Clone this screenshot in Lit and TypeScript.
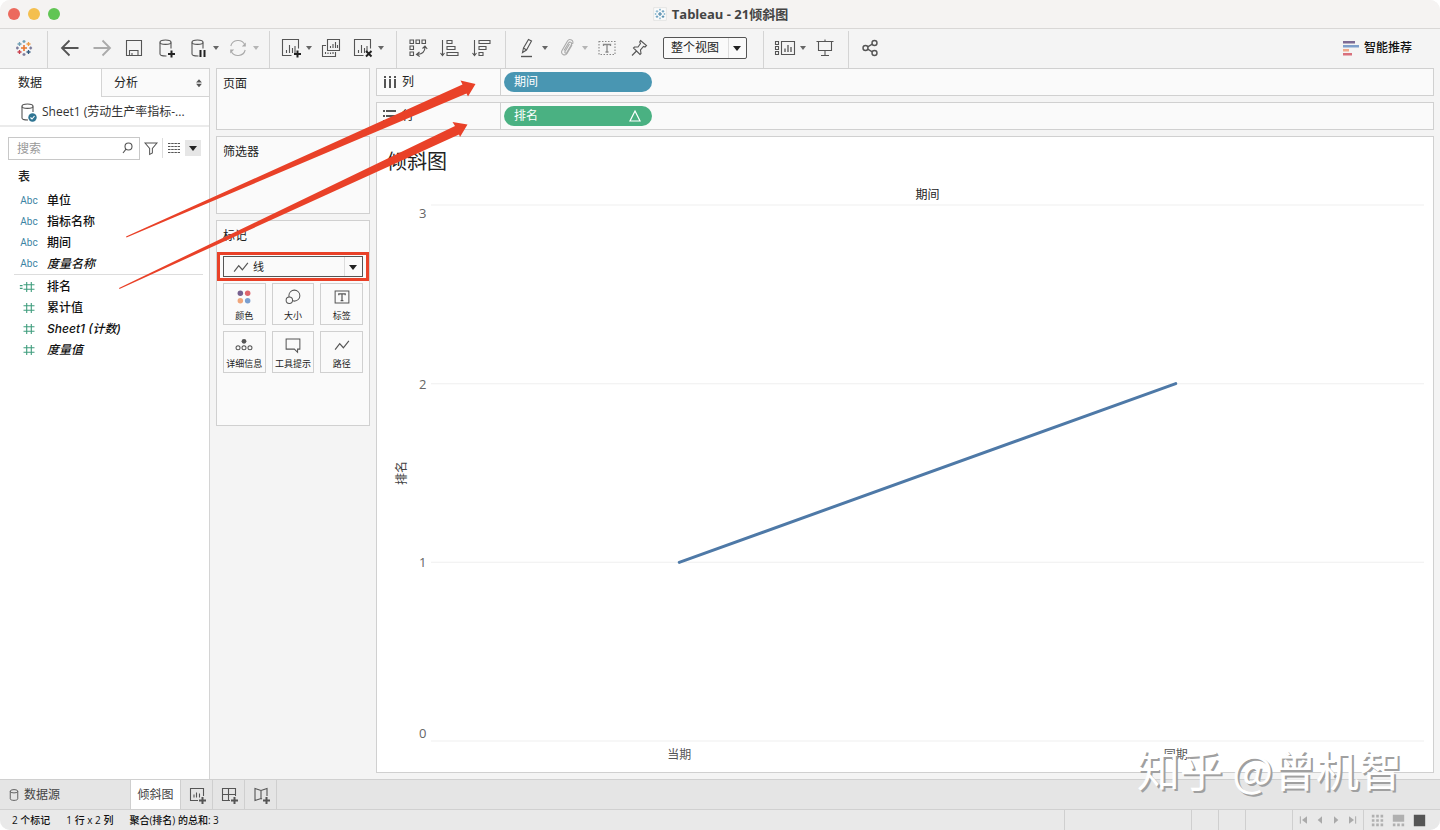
import { LitElement, html, svg, css, nothing, TemplateResult } from "lit";
import { customElement, property, state } from "lit/decorators.js";
import { classMap } from "lit/directives/class-map.js";

const plus = svg`<path d="M17.500 14.500v7M14 18h7" stroke="#222" stroke-width="2" fill="none"/>`;
const cylinder = svg`<path d="M12 20C8 20 6 19.200 6 18V6.500M17 6.500V12.500M12.500 20H12"/><ellipse cx="11.500" cy="6.200" rx="5.500" ry="2.200"/>`;
const bars = svg`<path d="M7.500 17v-3M10.500 17V9M13.500 17v-5M16 17v-7"/>`;
const letterT = (c: string) => svg`<path d="M8.500 10V8.500h7V10M12 8.500v7.500M10.500 16h3" stroke=${c} stroke-width="1.300"/>`;

const logo = (palette: string[]) => svg`
  <g stroke-width="1.300">
    <path d="M12 9v6M9 12h6" stroke=${palette[0]} stroke-width="1.600"/>
    <path d="M7.500 6v4M5.500 8h4" stroke=${palette[1]}/>
    <path d="M16.500 6v4M14.500 8h4" stroke=${palette[2]}/>
    <path d="M7.500 14v4M5.500 16h4" stroke=${palette[3]}/>
    <path d="M16.500 14v4M14.500 16h4" stroke=${palette[4]}/>
    <path d="M12 4v3M10.500 5.500h3" stroke=${palette[1]}/>
    <path d="M12 17v3M10.500 18.500h3" stroke=${palette[5]}/>
    <path d="M5.300 10.500v3M4 12h2.800" stroke=${palette[5]}/>
    <path d="M18.700 10.500v3M17.300 12h2.800" stroke=${palette[5]}/>
  </g>`;

const ICONS: Record<string, TemplateResult> = {
  logo: logo(["#e8762d", "#6f9fb5", "#eb9b45", "#c9414f", "#355c80", "#7b7b9b"]),
  logoBlue: svg`<path d="M2.500 2.500h19v19h-19z" fill="#fbfbfb" stroke="#ddd"/>${logo(["#3f7fa5", "#7fb0cc", "#5b95b8", "#5b95b8", "#3f7fa5", "#8db9d0"])}`,
  back: svg`<path d="M20.500 12H4M11.500 4.500L4 12l7.500 7.500" stroke-width="1.800"/>`,
  forward: svg`<path d="M3.500 12H20M12.500 4.500L20 12l-7.500 7.500" stroke="#aaa" stroke-width="1.800"/>`,
  save: svg`<path d="M4.500 4.500h15v15h-15zM7.500 19.500v-5h8.500v5M10 17v2.500"/>`,
  dataAdd: svg`${cylinder}${plus}`,
  dataPause: svg`${cylinder}<path d="M14.500 14v7M18.500 14v7" stroke="#222" stroke-width="2"/>`,
  refresh: svg`<g stroke="#aaa"><path d="M4.800 10a7.500 7.500 0 0 1 13.900-1.500M19.200 14a7.500 7.500 0 0 1-13.900 1.500"/><path d="M19.800 6.500v4h-4zM4.200 17.500v-4h4z" fill="#aaa" stroke="none"/></g>`,
  chartAdd: svg`<path d="M12.500 19.500h-9v-16h16v9"/>${bars}<path d="M18.500 14.500v7M15 18h7" stroke="#222" stroke-width="2"/>`,
  chartCopy: svg`<path d="M8.500 3.500h12v11h-12zM7 9.500H3.500v11h13V16"/><path d="M11.500 12v-2M14 12V8M16.500 12V6M18.500 12V9M6.500 18v-2M9 18v-1.500M11.500 18v-1.500M14 18v-2"/>`,
  chartClear: svg`<path d="M12.500 19.500h-9v-16h16v9"/>${bars}<path d="M15 15l5.500 5.500M20.500 15L15 20.500" stroke="#222" stroke-width="2"/>`,
  swap: svg`<path d="M4 4h3.500v3.500H4zM10 4h3.500v3.500H10zM16 4h3.500v3.500H16zM4 10h3.500v3.500H4zM4 16h3.500v3.500H4z"/><path d="M19 11c0 4-2.500 7-7.500 7.500M16.500 12.500L19 10l2.200 3M13.500 16l-3 2.500 3.200 2"/>`,
  sortUp: svg`<path d="M4.500 4v15M2.500 17l2 2.500 2-2.500M9 4.500h5v3H9zM9 10.500h8v3H9zM9 16.500h11v3H9z"/>`,
  sortDown: svg`<path d="M4.500 4v15M2.500 17l2 2.500 2-2.500M9 4.500h11v3H9zM9 10.500h7v3H9zM9 16.500h4v3H9z"/>`,
  highlight: svg`<path d="M7.500 16.500l1-4.500 5-8.500 3 1.500-5 9zM8.500 12l3 2" /><path d="M6 20.500h11" stroke-width="1.400"/>`,
  clip: svg`<path d="M17 9l-5 8.500c-2 3-7 .5-5-3L12.500 5c2-3.200 7-.5 5 3M14.500 8L10 15.500c-.8 1.500 1 2.200 1.800 1L16 9.500c1.800-3-1-4.500-2.500-2.500L9 14.500" stroke="#aaa"/>`,
  text: svg`<path d="M4 5.500h16v13H4z" stroke="#888" stroke-dasharray="1.500 1.500"/>${letterT("#888")}`,
  pin: svg`<path d="M13.500 4.500l6 5-1.500 1.500-1.500-.5-3 3.500.5 3.500-1 1L6.500 12l1-1 3.500 0 2.500-3.500-.8-1.500zM9.500 15L5 19.500"/>`,
  cards: svg`<path d="M2.500 5.500h3v3h-3zM2.500 10.500h3v3h-3zM2.500 15.500h3v3h-3zM8.500 5.500h13v13h-13z"/><path d="M12 16v-3.500M15 16V9M18 16v-5" stroke-width="1.300"/>`,
  present: svg`<path d="M3.500 5.500h17M5.500 5.500v9h13v-9M12 14.500v5M8 19.500h8M12 3.500v2"/>`,
  share: svg`<g stroke-width="1.400"><circle cx="7.500" cy="12" r="2.500"/><circle cx="16.500" cy="7" r="2.500"/><circle cx="16.500" cy="17" r="2.500"/><path d="M9.700 10.800l4.600-2.600M9.700 13.200l4.600 2.600"/></g>`,
  suggest: svg`<g stroke="none"><path d="M5 5h12v2.500H5z" fill="#7d6b94"/><path d="M5 9h16v2.500H5z" fill="#7e9fcb"/><path d="M5 13h6v2.500H5z" fill="#f0a98a"/><path d="M5 17h9v2.500H5z" fill="#d9707c"/></g>`,
  source: svg`<path d="M12 20C8 20 6 19.200 6 18V6.500M17 6.500V12"/><ellipse cx="11.500" cy="6.200" rx="5.500" ry="2.200"/><circle cx="16.500" cy="17.500" r="4.200" fill="#2f7593" stroke="none"/><path d="M14.500 17.500l1.500 1.500 2.500-3" stroke="#fff"/>`,
  search: svg`<circle cx="13.500" cy="10.500" r="3.500"/><path d="M11 13.200L8 17"/>`,
  filter: svg`<path d="M5.500 6.500h13l-5 6v5l-3 1.500v-6.500z"/>`,
  list: svg`<path d="M6 7.500h12M6 10.500h12M6 13.500h12M6 16.500h12" stroke-dasharray="2.500 .7"/>`,
  columns: svg`<path d="M8 6v12M13 6v12M18 6v12" stroke="#555" stroke-width="2" stroke-dasharray="2 1 9"/>`,
  rows: svg`<path d="M6 7h13M6 12h13M6 17h13" stroke="#555" stroke-width="2" stroke-dasharray="2 1 10 9"/>`,
  line: svg`<path d="M4.500 17L9.500 10.500 13.500 15 19.500 7.500" stroke-width="1.300"/>`,
  color: svg`<g stroke="none"><circle cx="8" cy="8" r="3" fill="#76608f"/><circle cx="16" cy="8" r="3" fill="#e0656c"/><circle cx="8" cy="16" r="3" fill="#f0a67c"/><circle cx="16" cy="16" r="3" fill="#7a9fd0"/></g>`,
  size: svg`<circle cx="13.500" cy="10.500" r="6"/><circle cx="8" cy="15.500" r="3.500" fill="#fafafa"/>`,
  label: svg`<path d="M4.500 5.500h15v13h-15z"/>${letterT("#555")}`,
  detail: svg`<circle cx="12" cy="8" r="2.600" fill="#555" stroke="none"/><circle cx="5.500" cy="15" r="2.200"/><circle cx="12" cy="15" r="2.200"/><circle cx="18.500" cy="15" r="2.200"/>`,
  tooltip: svg`<path d="M4.500 5.500h15v11h-2.500v3.500l-3.500-3.500h-9z"/>`,
  hash: svg`<path d="M9.500 6.500v11M14.500 6.500v11M6 9.500h12M6 14.500h12" stroke="#3f9d7d" stroke-width="1.200"/>`,
  calcHash: svg`<path d="M9.500 6.500v11M14.500 6.500v11M6 9.500h12M6 14.500h12M2 10.500h3M2 13.500h3" stroke="#3f9d7d" stroke-width="1.200"/>`,
  delta: svg`<path d="M12 7l5 10H7z" stroke="#fff" stroke-width="1.200"/>`,
  database: svg`<ellipse cx="12" cy="7.500" rx="4.500" ry="2"/><path d="M7.500 7.500v9c0 2.600 9 2.600 9 0v-9"/>`,
  newSheet: svg`<path d="M13 17.500H5.500v-12h13V13M9 14.500v-3M11.500 14.500v-5M14.500 14.500v-4"/><path d="M17.500 14v7M14 17.500h7" stroke="#555" stroke-width="2"/>`,
  newBoard: svg`<path d="M13 17.500H5.500v-12h13V13M5.500 11.500h13M11.500 5.500v12"/><path d="M17.500 14v7M14 17.500h7" stroke="#555" stroke-width="2"/>`,
  newStory: svg`<path d="M13 16l-1-.5-6 2v-12l6 2 6-2V13M12 7.500v8"/><path d="M17.500 14v7M14 17.500h7" stroke="#555" stroke-width="2"/>`,
  sorter: svg`<path d="M12 7.500l3.500 4h-7zM12 17l3.500-4h-7z" fill="#555" stroke="none"/>`,
  first: svg`<path d="M6.500 6.500v11" stroke="#aaa" stroke-width="1.500"/><path d="M16.500 6.500v11L9 12z" fill="#aaa" stroke="none"/>`,
  prev: svg`<path d="M15 6.500v11L8.500 12z" fill="#aaa" stroke="none"/>`,
  next: svg`<path d="M9 6.500v11l6.500-5.500z" fill="#aaa" stroke="none"/>`,
  last: svg`<path d="M17.500 6.500v11" stroke="#aaa" stroke-width="1.500"/><path d="M7.500 6.500v11l7.500-5.500z" fill="#aaa" stroke="none"/>`,
  tiles: svg`<path d="M5.500 7h13M5.500 12h13M5.500 17h13" stroke="#b0b0b0" stroke-width="3" stroke-dasharray="3 2"/>`,
  strip: svg`<path d="M5.500 5.500h13v8h-13z" fill="#b0b0b0" stroke="none"/><path d="M5.500 17h13" stroke="#b0b0b0" stroke-width="3" stroke-dasharray="3 2"/>`,
  full: svg`<path d="M5.500 5.500h13v13h-13z" fill="#555" stroke="none"/>`,
};

@customElement("ui-icon")
export class UiIcon extends LitElement {
  @property() name = "";
  @property({ type: Number }) size = 24;
  static styles = css`
    :host { display: inline-flex; flex: none; }
    svg { fill: none; stroke: #555; stroke-width: 1.1; }
  `;
  render() {
    return html`<svg width=${this.size} height=${this.size} viewBox="0 0 24 24" aria-hidden="true">${ICONS[this.name]}</svg>`;
  }
}

@customElement("ui-caret")
export class UiCaret extends LitElement {
  static styles = css`
    :host { display: block; width: 0; height: 0; border: 3px solid transparent; border-top: 4px solid currentColor; border-bottom: 0; }
    :host([large]) { border-width: 5px 4px 0; }
  `;
  render() { return nothing; }
}

interface Tool { icon: string; label: string; menu?: boolean; off?: boolean }

const GROUPS: { cls: string; tools: Tool[]; fit?: boolean }[] = [
  { cls: "first", tools: [
    { icon: "back", label: "撤消" }, { icon: "forward", label: "重做" }, { icon: "save", label: "保存" },
    { icon: "dataAdd", label: "新建数据源" }, { icon: "dataPause", label: "暂停自动更新", menu: true },
    { icon: "refresh", label: "运行更新", menu: true, off: true }] },
  { cls: "", tools: [
    { icon: "chartAdd", label: "新建工作表", menu: true }, { icon: "chartCopy", label: "复制" },
    { icon: "chartClear", label: "清除工作表", menu: true }] },
  { cls: "tight", tools: [
    { icon: "swap", label: "交换行和列" }, { icon: "sortUp", label: "升序排序" }, { icon: "sortDown", label: "降序排序" }] },
  { cls: "wide", fit: true, tools: [
    { icon: "highlight", label: "突出显示", menu: true }, { icon: "clip", label: "组成员", menu: true, off: true },
    { icon: "text", label: "显示标记标签" }, { icon: "pin", label: "固定轴" }] },
  { cls: "tight", tools: [{ icon: "cards", label: "显示/隐藏功能区", menu: true }, { icon: "present", label: "演示模式" }] },
  { cls: "open", tools: [{ icon: "share", label: "共享" }] },
];

const DIMENSIONS = [
  { name: "单位" }, { name: "指标名称" }, { name: "期间" }, { name: "度量名称", auto: true },
];
const MEASURES = [
  { name: "排名", icon: "calcHash" }, { name: "累计值", icon: "hash" },
  { name: "Sheet1 (计数)", icon: "hash", auto: true }, { name: "度量值", icon: "hash", auto: true },
];
const MARKS = [
  ["color", "颜色"], ["size", "大小"], ["label", "标签"],
  ["detail", "详细信息"], ["tooltip", "工具提示"], ["line", "路径"],
];
const POINTS = [{ period: "当期", rank: 1 }, { period: "同期", rank: 2 }];
const TOP = 3;

@customElement("app-root")
export class AppRoot extends LitElement {
  @state() private sheet = "倾斜图";

  static styles = css`
    :host { display: block; font: 12px/18px "Open Sans", "Noto Sans CJK SC", sans-serif; color: #222; }
    * { box-sizing: border-box; }
    button, select, input { font: inherit; color: inherit; border: 0; padding: 0; margin: 0; background: none; border-radius: 0; outline: 0; }
    select { appearance: none; }
    ul { list-style: none; margin: 0; padding: 0; }
    h1, h2, h3 { font: inherit; margin: 0; }
    .window { position: relative; height: 100vh; display: flex; flex-direction: column; background: #f4f4f4; border-radius: 10px; overflow: hidden; }

    .titlebar { height: 29px; flex: none; display: grid; grid-template-columns: 1fr auto 1fr; align-items: center; background: #f5f3f2; border-bottom: 1px solid #d9d7d6; }
    .lights { display: flex; gap: 8px; padding-left: 8px; }
    .light { width: 12px; height: 12px; border-radius: 50%; }
    .red { background: #ec6a5e; } .yellow { background: #f4bf4f; } .green { background: #61c554; }
    .title { display: flex; align-items: center; gap: 4px; font-family: "Open Sans", "Noto Sans CJK SC", sans-serif; font-size: 13px; font-weight: 700; line-height: 16px; padding-bottom: 1px; color: #444; }

    .toolbar { height: 39px; flex: none; display: flex; align-items: center; }
    .group { display: flex; align-items: center; align-self: stretch; gap: 2px; margin-top: 2px; padding: 0 10px 4px 6px; border-right: 1px solid #d4d4d4; }
    .group.tight { padding-right: 8px; }
    .group.first { padding: 0 8px 4px 7px; }
    .group.wide { padding-right: 16px; }
    .group.open { border: 0; }
    .group.brand { width: 48px; padding: 0 0 4px; justify-content: center; }
    .tool { display: flex; align-items: center; }
    .tool-button { width: 30px; height: 28px; display: flex; align-items: center; justify-content: center; }
    .menu-button { width: 10px; height: 28px; margin-left: -2px; display: flex; align-items: center; justify-content: center; color: #666; }
    .menu-button.off { color: #b5b5b5; }
    .combo { display: flex; align-items: center; position: relative; border: 1px solid #555; background: #fafafa; }
    .combo select { flex: 1; height: 20px; min-width: 0; }
    .combo ui-caret { position: absolute; right: 5px; top: 8px; pointer-events: none; color: #222; }
    .combo::after { content: ""; position: absolute; right: 17px; top: 0; bottom: 0; border-left: 1px solid #ddd; }
    .fit { width: 84px; margin-left: 7px; border-radius: 2px; }
    .fit select { padding-left: 7px; }
    .suggest { display: flex; align-items: center; gap: 2px; margin-left: auto; padding: 0 28px 2px 0; font-weight: 500; color: #111; }

    .body { flex: 1; min-height: 0; display: flex; gap: 6px; padding-right: 6px; }
    .data { width: 210px; flex: none; background: #fff; border: 1px solid #d4d4d4; border-left: 0; border-bottom: 0; }
    .tabs { display: flex; height: 28px; }
    .tab { flex: 1; text-align: left; padding-left: 18px; }
    .tab.rest { flex: 0 0 108px; display: flex; align-items: center; justify-content: space-between; padding-left: 12px; border-left: 1px solid #d4d4d4; border-bottom: 1px solid #d4d4d4; background: #fafafa; }
    .source { width: 100%; height: 30px; display: flex; align-items: center; gap: 2px; padding: 1px 0 0 16px; border-bottom: 2px solid #ebebeb; color: #333; }
    .find { display: flex; align-items: center; height: 22px; margin: 10px 8px 0; }
    .search { width: 132px; height: 23px; display: flex; align-items: center; border: 1px solid #c8c8c8; padding-left: 8px; }
    .search input { flex: 1; min-width: 0; padding-top: 1px; }
    .search input::placeholder { color: #999; opacity: 1; }
    .find-button { display: flex; align-items: center; justify-content: center; width: 22px; height: 20px; }
    .find-button.list { border-left: 1px solid #ddd; margin-right: 1px; }
    .find-button.more { width: 16px; height: 16px; background: #e6e6e6; color: #222; }
    .caption { padding: 9px 18px 4px; line-height: 18px; font-weight: 500; }
    .field { display: flex; align-items: center; height: 21px; padding-left: 16px; font-weight: 500; color: #111; }
    .field-type { width: 26px; margin-right: 5px; display: flex; justify-content: center; font-family: Roboto, sans-serif; font-size: 10px; font-weight: 400; color: #3b83a3; }
    .auto { font-family: Inter, "Noto Sans CJK SC", sans-serif; font-style: italic; }
    .measures { margin: 0 6px 0 14px; border-top: 1px solid #ddd; padding-top: 1px; }
    .measures .field { padding-left: 2px; }

    .cards { width: 154px; flex: none; display: flex; flex-direction: column; gap: 6px; }
    .card { border: 1px solid #d0d0d0; background: #fafafa; padding: 6px; }
    .pages { height: 62px; } .filters { height: 78px; } .marks { height: 206px; }
    .mark-type { margin: 11px 0 6px; height: 21px; }
    .mark-type ui-icon { margin-left: 6px; }
    .mark-type select { height: 19px; padding-left: 1px; font-size: 11px; }
    .mark-grid { display: grid; grid-template-columns: repeat(3, 1fr); gap: 6px; }
    .mark { height: 42px; display: flex; flex-direction: column; align-items: center; justify-content: space-between; padding: 2px 0 1px; border: 1px solid #d0d0d0; font-size: 9px; line-height: 14px; white-space: nowrap; background: #fafafa; }

    .sheet { flex: 1; min-width: 0; display: flex; flex-direction: column; gap: 6px; padding-bottom: 6px; }
    .shelf { height: 28px; flex: none; display: flex; align-items: center; border: 1px solid #d0d0d0; background: #fafafa; }
    .shelf-name { width: 124px; height: 100%; display: flex; align-items: center; gap: 1px; border-right: 1px solid #d0d0d0; }
    .pill { width: 148px; height: 20px; margin-left: 3px; padding: 0 5px 0 10px; border-radius: 10px; display: flex; align-items: center; justify-content: space-between; color: #fff; }
    .pill.dimension { background: #4996b2; }
    .pill.measure { background: #4ab182; }
    .view { flex: 1; min-height: 0; display: flex; flex-direction: column; background: #fff; border: 1px solid #d0d0d0; padding: 10px 9px 8px 10px; }
    .view-title { font-size: 20px; line-height: 30px; }
    .chart { flex: 1; min-height: 0; display: grid; grid-template-columns: 30px 10px minmax(0, 1fr); column-gap: 2px; grid-template-rows: 28px minmax(0, 1fr) 23px; }
    .chart-head { grid-column: 3; align-self: end; text-align: center; line-height: 20px; }
    .axis-name { grid-column: 1; grid-row: 2; justify-self: center; align-self: center; writing-mode: vertical-rl; text-orientation: sideways; transform: rotate(180deg); color: #444; }
    .axis { grid-column: 2; grid-row: 2; display: grid; grid-template-rows: 1fr 2fr 2fr 1fr; align-items: center; text-align: left; color: #666; font-size: 13px; line-height: 16px; }
    .axis span:first-child { align-self: start; }
    .axis span:last-child { align-self: end; }
    .plot { grid-column: 3; grid-row: 2; width: 100%; height: 100%; min-height: 0; overflow: visible; }
    .grid-line { stroke: #efefef; vector-effect: non-scaling-stroke; }
    .series { fill: none; stroke: #4e79a7; stroke-width: 3; stroke-linecap: round; vector-effect: non-scaling-stroke; }
    .periods { grid-column: 3; grid-row: 3; display: flex; align-items: end; color: #555; }
    .periods span { flex: 1; text-align: center; }

    .sheets { height: 31px; flex: none; display: flex; background: #e5e5e5; border-top: 1px solid #d0d0d0; border-bottom: 1px solid #d0d0d0; color: #444; }
    .sheet-tab { width: 32px; display: flex; align-items: center; justify-content: center; border-right: 1px solid #cfcfcf; }
    .sheet-tab.origin { width: 131px; justify-content: flex-start; padding-left: 4px; }
    .sheet-tab.named { width: 50px; }
    .sheet-tab.active { background: #fff; }
    .status { height: 20px; flex: none; display: flex; background: #e9e9e9; padding: 0 10px 0 12px; font-size: 10px; line-height: 20px; font-weight: 500; color: #111; }
    .status-text { margin-right: 16px; }
    .slot { width: 27px; border-left: 1px solid #cfcfcf; }
    .slot.long { width: 127px; margin-left: auto; }
    .slot.mid { width: 47px; }
    .slot.nav { width: 71px; display: flex; align-items: center; justify-content: center; }
    .slot.layout { width: 67px; display: flex; align-items: center; justify-content: flex-end; }
    .slot button { display: flex; }

    .notes { position: absolute; inset: 0; width: 100%; height: 100%; pointer-events: none; }
    .watermark { position: absolute; right: 38px; bottom: 31px; font: 43px/62px "Noto Sans CJK SC", sans-serif; color: #fff; text-shadow: 2px 2px 0 #a0a0a0; pointer-events: none; white-space: nowrap; }
  `;

  private renderTool(t: Tool) {
    return html`<div class="tool">
      <button class="tool-button" aria-label=${t.label}><ui-icon name=${t.icon}></ui-icon></button>
      ${t.menu ? html`<button class=${classMap({ "menu-button": true, off: !!t.off })} aria-label="${t.label}选项"><ui-caret></ui-caret></button>` : nothing}
    </div>`;
  }

  private renderToolbar() {
    return html`<div class="toolbar" role="toolbar">
      <div class="group brand"><ui-icon name="logo"></ui-icon></div>
      ${GROUPS.map((g) => html`<div class="group ${g.cls}">
        ${g.tools.map((t) => this.renderTool(t))}
        ${g.fit ? html`<div class="combo fit"><select aria-label="适合"><option>整个视图</option></select><ui-caret large></ui-caret></div>` : nothing}
      </div>`)}
      <button class="suggest"><ui-icon name="suggest"></ui-icon>智能推荐</button>
    </div>`;
  }

  private renderData() {
    return html`<section class="data">
      <div class="tabs">
        <button class="tab">数据</button>
        <button class="tab rest">分析<ui-icon name="sorter" size="20"></ui-icon></button>
      </div>
      <button class="source"><ui-icon name="source"></ui-icon>Sheet1 (劳动生产率指标-...</button>
      <div class="find">
        <label class="search"><input placeholder="搜索" aria-label="搜索字段"><ui-icon name="search"></ui-icon></label>
        <button class="find-button" aria-label="筛选字段"><ui-icon name="filter" size="22"></ui-icon></button>
        <button class="find-button list" aria-label="查看方式"><ui-icon name="list"></ui-icon></button>
        <button class="find-button more" aria-label="更多"><ui-caret large></ui-caret></button>
      </div>
      <h3 class="caption">表</h3>
      <ul>${DIMENSIONS.map((f) => html`<li class="field"><span class="field-type">Abc</span><span class=${f.auto ? "auto" : ""}>${f.name}</span></li>`)}</ul>
      <ul class="measures">${MEASURES.map((f) => html`<li class="field"><span class="field-type"><ui-icon name=${f.icon} size="22"></ui-icon></span><span class=${f.auto ? "auto" : ""}>${f.name}</span></li>`)}</ul>
    </section>`;
  }

  private renderCards() {
    return html`<div class="cards">
      <section class="card pages"><h2>页面</h2></section>
      <section class="card filters"><h2>筛选器</h2></section>
      <section class="card marks">
        <h2>标记</h2>
        <div class="combo mark-type"><ui-icon name="line" size="22"></ui-icon><select aria-label="标记类型"><option>线</option></select><ui-caret large></ui-caret></div>
        <div class="mark-grid">${MARKS.map(([icon, name]) => html`<button class="mark"><ui-icon name=${icon} size="22"></ui-icon>${name}</button>`)}</div>
      </section>
    </div>`;
  }

  private renderChart() {
    const ticks = Array.from({ length: TOP + 1 }, (_, i) => TOP - i);
    const y = (v: number) => ((TOP - v) / TOP) * 100;
    const path = POINTS.map((p, i) => `${((i + 0.5) / POINTS.length) * 100},${y(p.rank)}`).join(" ");
    return html`<section class="view">
      <h1 class="view-title">${this.sheet}</h1>
      <div class="chart">
        <div class="chart-head">期间</div>
        <div class="axis-name">排名</div>
        <div class="axis">${ticks.map((t) => html`<span>${t}</span>`)}</div>
        <svg class="plot" viewBox="0 0 100 100" preserveAspectRatio="none">
          ${ticks.map((t) => svg`<line class="grid-line" x1="0" x2="100" y1=${y(t)} y2=${y(t)}/>`)}
          <polyline class="series" points=${path}/>
        </svg>
        <div class="periods">${POINTS.map((p) => html`<span>${p.period}</span>`)}</div>
      </div>
    </section>`;
  }

  render() {
    return html`<div class="window">
      <header class="titlebar">
        <div class="lights"><span class="light red"></span><span class="light yellow"></span><span class="light green"></span></div>
        <div class="title"><ui-icon name="logoBlue" size="16"></ui-icon>Tableau - 21倾斜图</div>
      </header>
      ${this.renderToolbar()}
      <main class="body">
        ${this.renderData()}
        ${this.renderCards()}
        <div class="sheet">
          <div class="shelf"><div class="shelf-name"><ui-icon name="columns"></ui-icon>列</div><button class="pill dimension">期间</button></div>
          <div class="shelf"><div class="shelf-name"><ui-icon name="rows"></ui-icon>行</div><button class="pill measure">排名<ui-icon name="delta"></ui-icon></button></div>
          ${this.renderChart()}
        </div>
      </main>
      <nav class="sheets">
        <button class="sheet-tab origin"><ui-icon name="database" size="20"></ui-icon>数据源</button>
        <button class="sheet-tab named active">${this.sheet}</button>
        <button class="sheet-tab" aria-label="新建工作表"><ui-icon name="newSheet"></ui-icon></button>
        <button class="sheet-tab" aria-label="新建仪表板"><ui-icon name="newBoard"></ui-icon></button>
        <button class="sheet-tab" aria-label="新建故事"><ui-icon name="newStory"></ui-icon></button>
      </nav>
      <footer class="status">
        <span class="status-text">2 个标记</span><span class="status-text">1 行 x 2 列</span><span class="status-text">聚合(排名) 的总和: 3</span>
        <span class="slot long"></span><span class="slot"></span><span class="slot"></span><span class="slot mid"></span>
        <span class="slot nav">${["first", "prev", "next", "last"].map((n) => html`<button aria-label=${n}><ui-icon name=${n} size="16"></ui-icon></button>`)}</span>
        <span class="slot layout">${["tiles", "strip", "full"].map((n) => html`<button aria-label=${n}><ui-icon name=${n} size="21"></ui-icon></button>`)}</span>
      </footer>
      <svg class="notes" aria-hidden="true">
        <g fill="#e94128">
          <path d="M126 236.500L462.500 84.500 460.500 80.500 475.500 84 468 96.500 466.500 93.500 126.500 237.500z"/>
          <path d="M119 288L455 126 452.500 122 467.500 124.500 460 137 459 134.500 119.500 289z"/>
        </g>
        <path d="M218.500 253.500h149v26h-149z" fill="none" stroke="#e94128" stroke-width="3"/>
      </svg>
      <div class="watermark">知乎 @曾机智</div>
    </div>`;
  }
}
